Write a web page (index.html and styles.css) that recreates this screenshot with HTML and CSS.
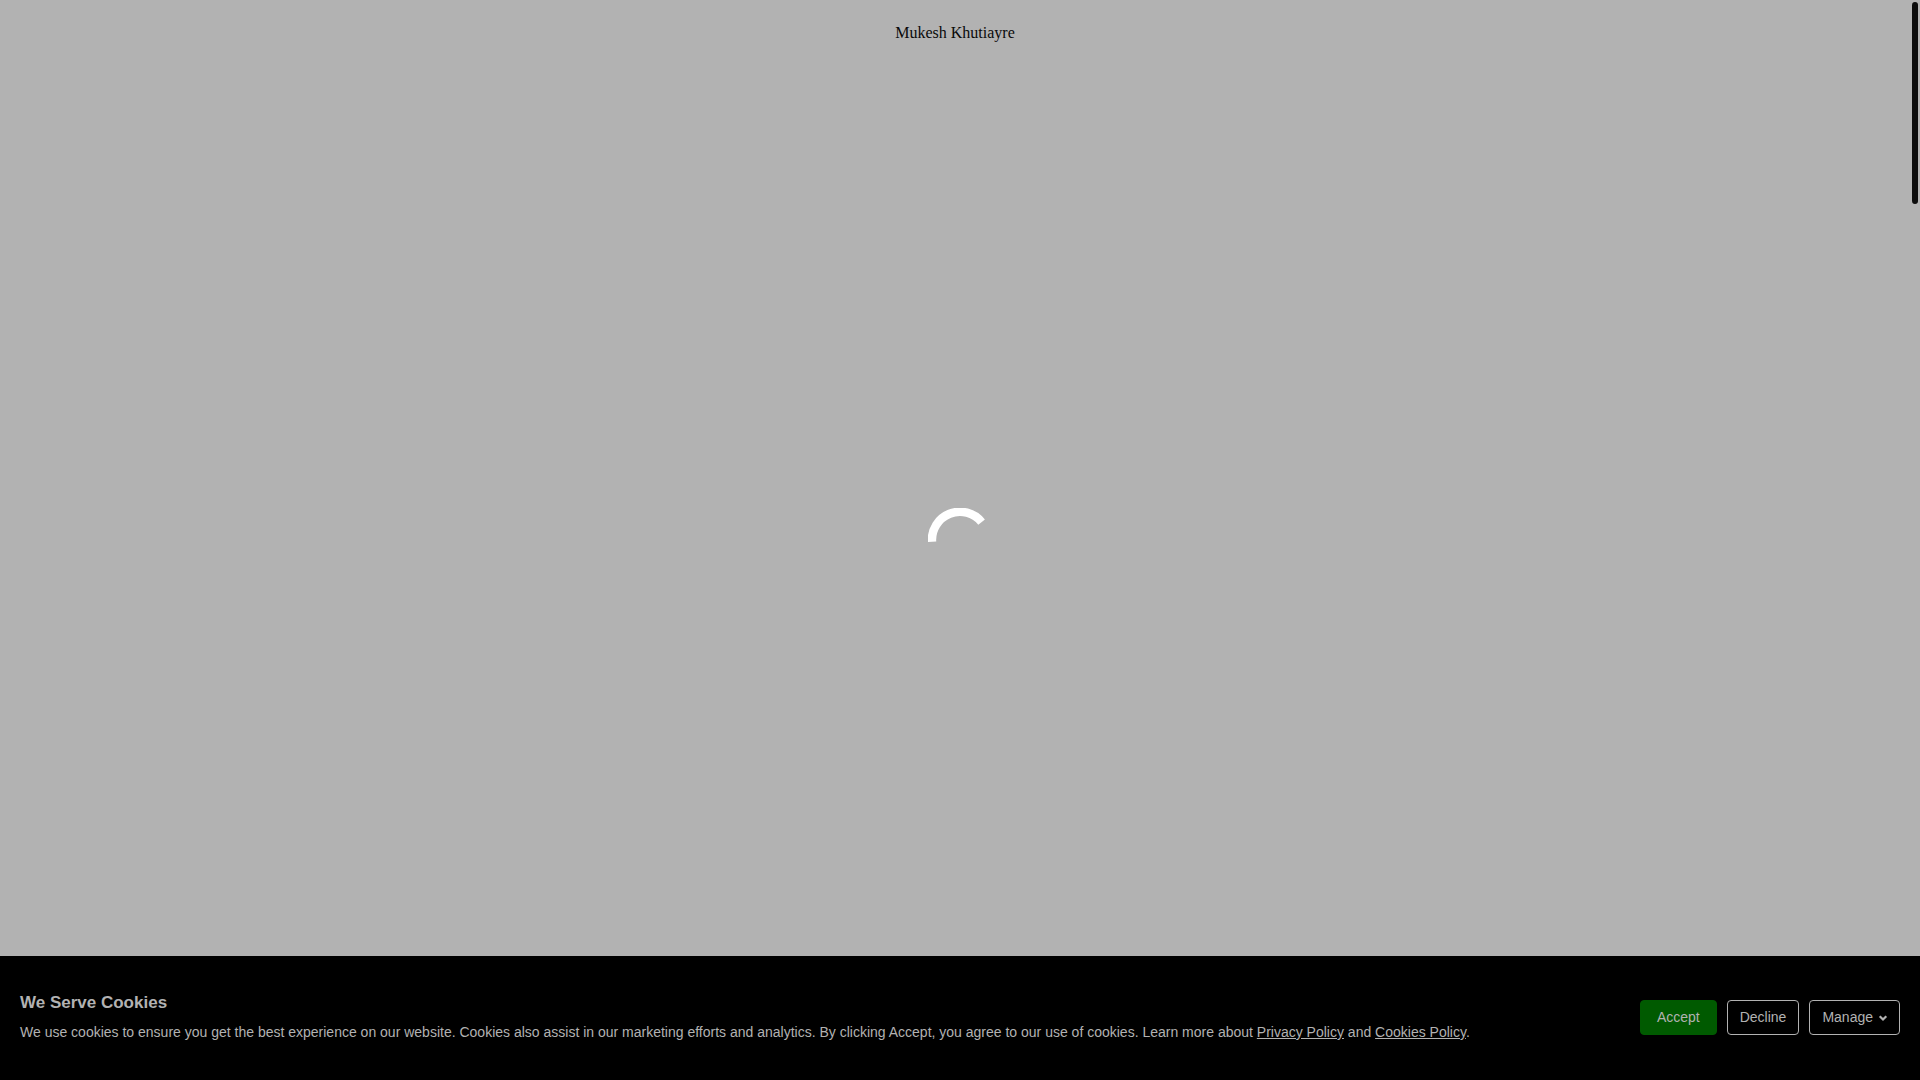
FILE: index.html
```html
<!DOCTYPE html>
<html lang="en">
<head>
  <meta charset="UTF-8" />
  <meta name="viewport" content="width=device-width, initial-scale=1.0"/>
  <title>Mukesh Khutiayre</title>
  <link rel="stylesheet" href="styles.css">
</head>
<body>

<header class="site-header">Mukesh Khutiayre</header>

<main class="loader">
  <svg class="spinner" viewBox="0 0 64 64" role="img" aria-label="Loading">
    <path d="M4 33.8A28 28 0 0 1 53.6 14.1" fill="none" stroke="currentColor" stroke-width="8.5"/>
  </svg>
</main>

<section class="cookie-bar" aria-label="Cookies">
  <div class="cookie-text">
    <h2>We Serve Cookies</h2>
    <p>We use cookies to ensure you get the best experience on our website. Cookies also assist in our marketing efforts and analytics. By clicking Accept, you agree to our use of cookies. Learn more about <a href="#privacy">Privacy Policy</a> and <a href="#cookies">Cookies Policy</a>.</p>
  </div>
  <div class="actions">
    <button type="button" class="btn btn-accept">Accept</button>
    <button type="button" class="btn">Decline</button>
    <button type="button" class="btn">Manage
      <svg class="chevron" viewBox="0 0 8 6" aria-hidden="true">
        <path d="M.7 1.2L4 4.5 7.3 1.2" fill="none" stroke="currentColor" stroke-width="2.2"/>
      </svg>
    </button>
  </div>
</section>

<div class="scroll-thumb"></div>

</body>
</html>
```

FILE: styles.css
```css
* {
  box-sizing: border-box;
}

body {
  margin: 0;
  min-height: 100vh;
  display: flex;
  flex-direction: column;
  background: #b2b2b2;
  color: #0a0a0a;
  font-family: "Liberation Serif", "Times New Roman", serif;
  font-size: 16px;
}

.site-header {
  padding: 24px 10px 0 0;
  line-height: 18px;
  text-align: center;
}

/* spinner stays in the middle of the window */
.loader {
  position: fixed;
  inset: 0;
  display: flex;
  justify-content: center;
  align-items: center;
  color: #fff;
  pointer-events: none;
}

.spinner {
  width: 64px;
  height: 64px;
}

.cookie-bar {
  margin-top: auto;
  padding: 35px 20px 37px;
  display: flex;
  justify-content: space-between;
  align-items: center;
  gap: 20px;
  background: #000;
  color: #b2b2b2;
  font-family: "Liberation Sans", Arial, sans-serif;
  font-size: 14px;
}

.cookie-text h2 {
  margin: 0 0 6px;
  font-size: 17px;
  line-height: 24px;
}

.cookie-text p {
  margin: 0;
  line-height: 22px;
}

.cookie-text a {
  color: inherit;
}

.actions {
  display: flex;
  flex-shrink: 0;
  gap: 10px;
}

.btn {
  display: flex;
  align-items: center;
  gap: 6px;
  height: 35px;
  padding: 0 12px;
  border: 1px solid #b2b2b2;
  border-radius: 4px;
  background: transparent;
  color: inherit;
  font-family: inherit;
  font-size: 14px;
  cursor: pointer;
}

.btn-accept {
  padding: 0 16px;
  border-color: #005a00;
  background: #005a00;
}

.chevron {
  width: 8px;
  height: 6px;
  margin-top: 2px;
  overflow: visible;
}

.scroll-thumb {
  position: fixed;
  top: 2px;
  right: 2px;
  width: 6px;
  height: 202px;
  border-radius: 3px;
  background: #0c0c0c;
}
```
